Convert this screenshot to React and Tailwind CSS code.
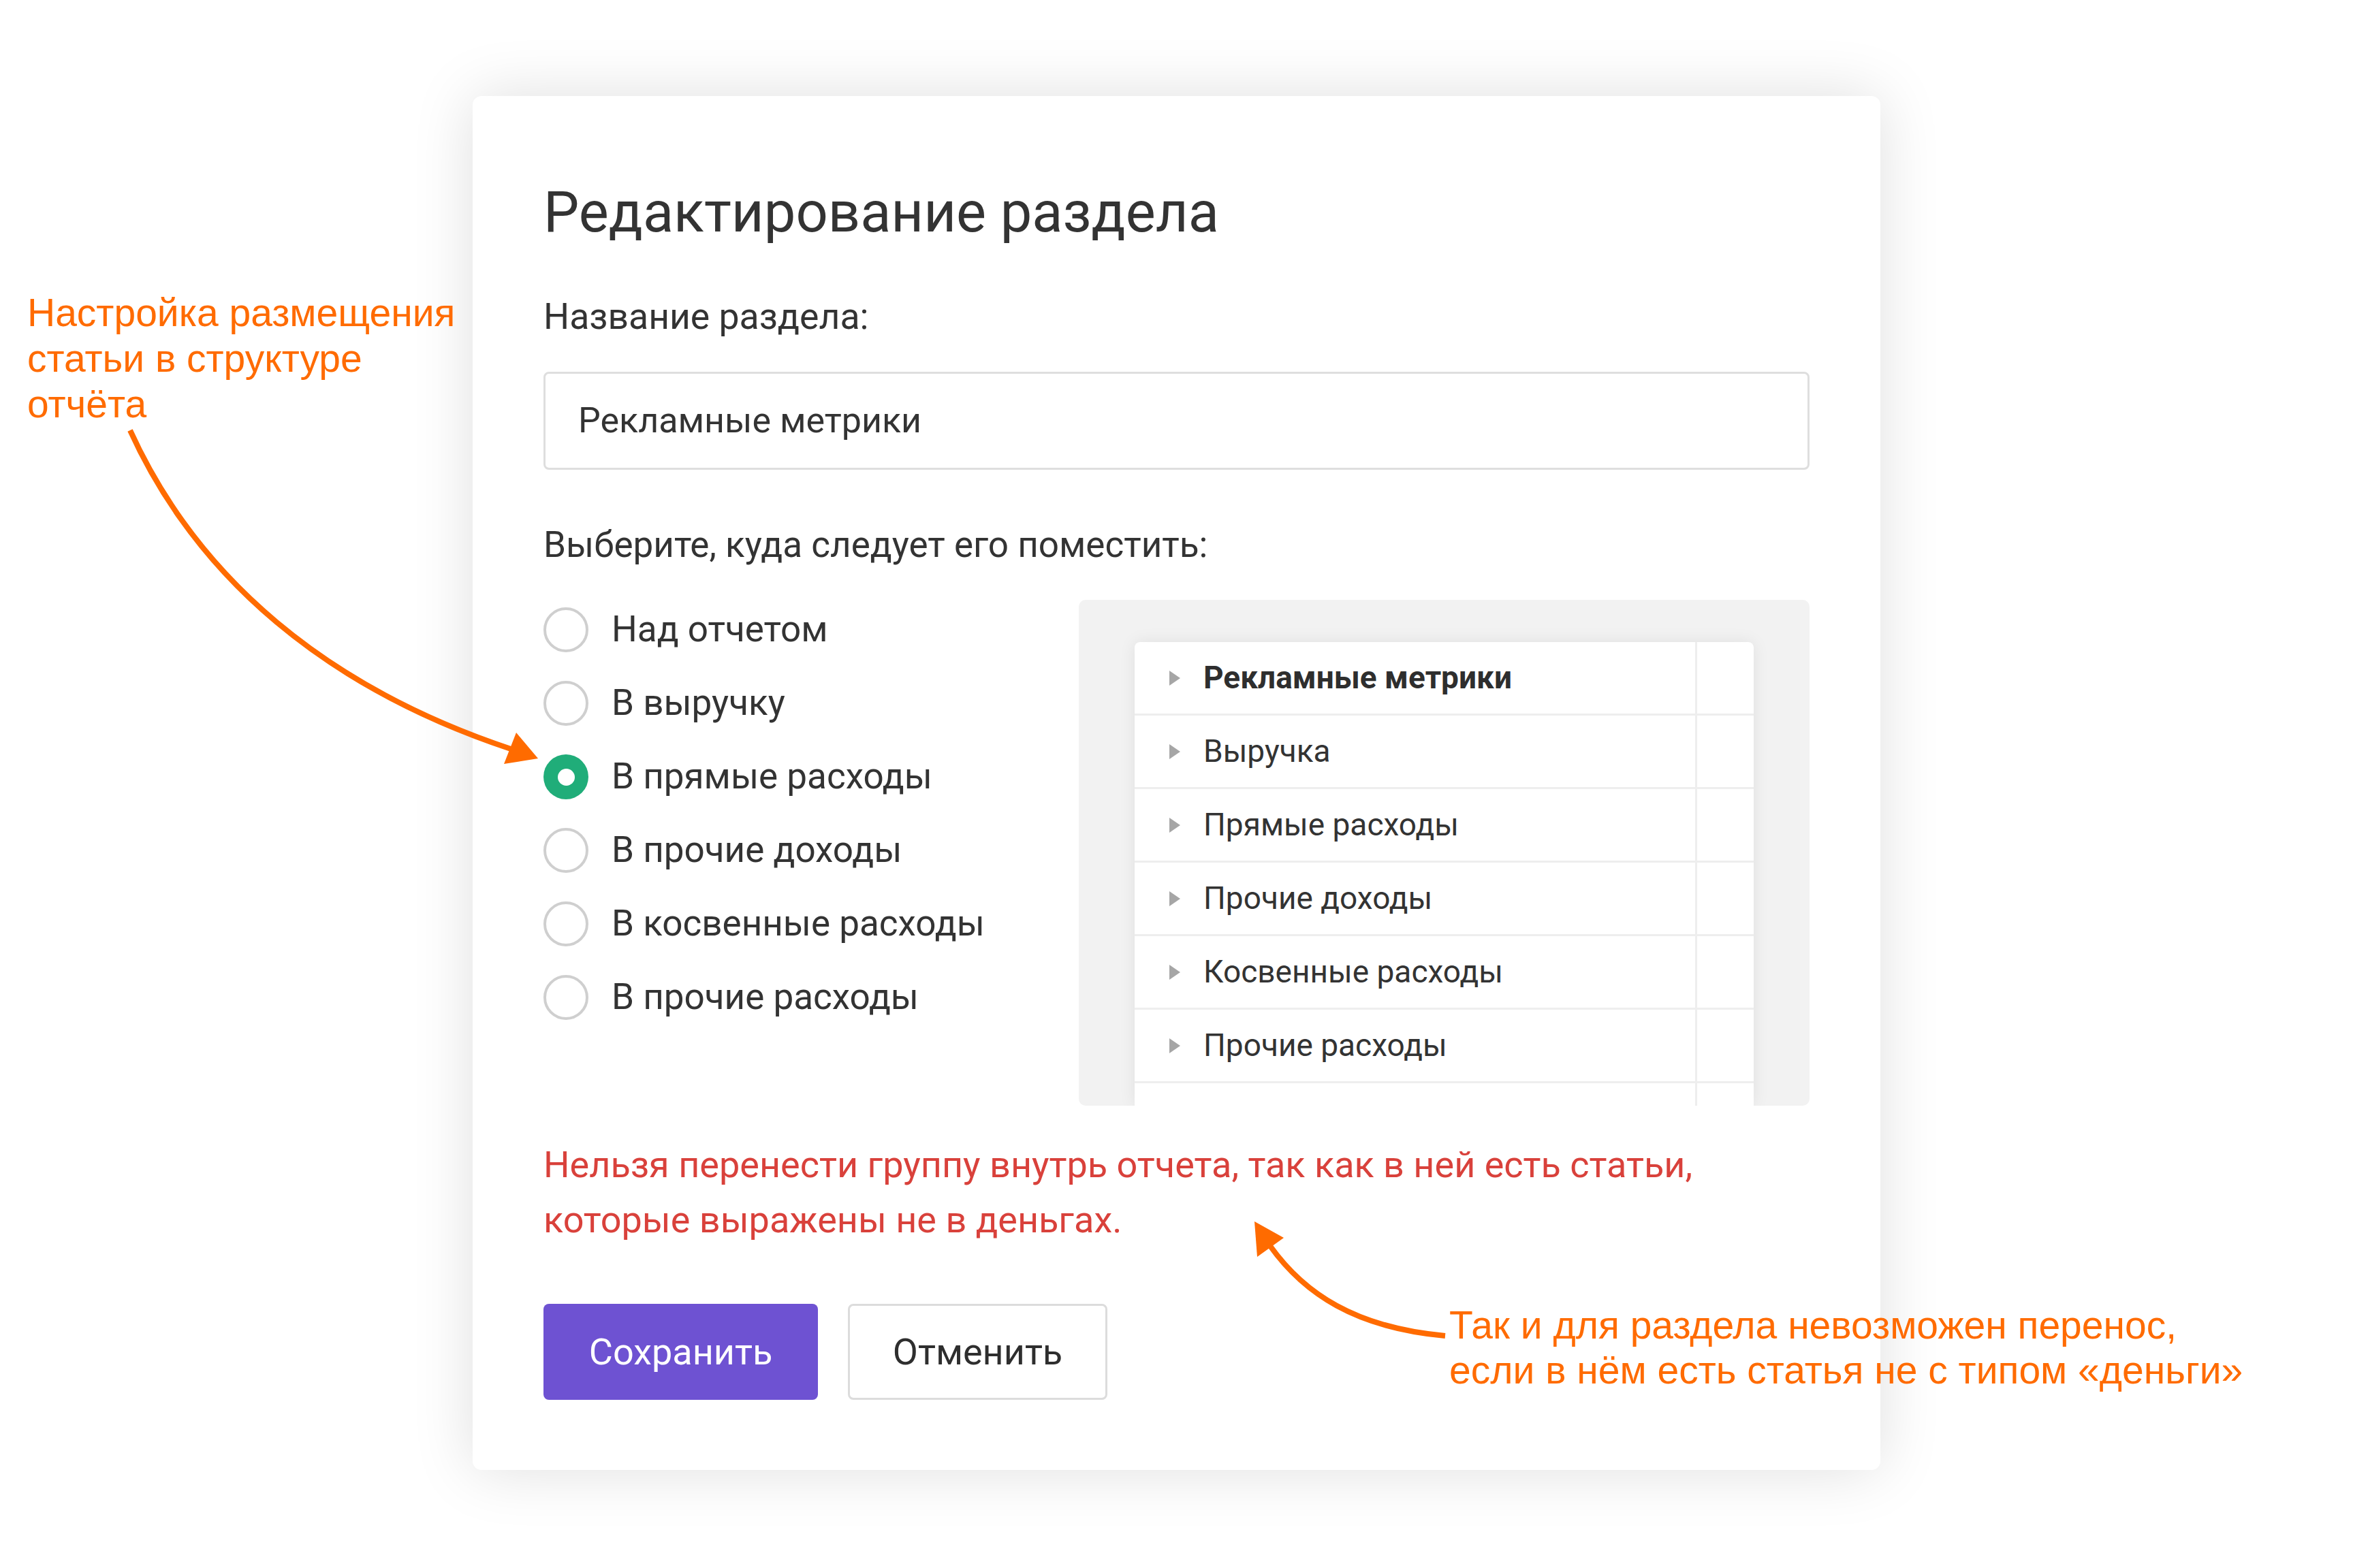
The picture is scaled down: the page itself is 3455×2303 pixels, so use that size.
const radios = [
  { label: "Над отчетом" },
  { label: "В выручку" },
  { label: "В прямые расходы", checked: true },
  { label: "В прочие доходы" },
  { label: "В косвенные расходы" },
  { label: "В прочие расходы" },
];

const sections = [
  "Рекламные метрики",
  "Выручка",
  "Прямые расходы",
  "Прочие доходы",
  "Косвенные расходы",
  "Прочие расходы",
  "",
];

const Radio = ({ checked }) =>
  checked ? (
    <span className="w-[66px] h-[66px] rounded-full bg-[#20ad79] flex items-center justify-center shrink-0">
      <span className="w-[25px] h-[25px] rounded-full bg-white" />
    </span>
  ) : (
    <span className="w-[66px] h-[66px] rounded-full border-[4px] border-[#cfcfcf] bg-white shrink-0" />
  );

const Arrows = () => (
  <svg className="absolute inset-0 pointer-events-none" width="3455" height="2303">
    {/* левая стрелка */}
    <path d="M191 632 C 290 850, 480 1010, 750 1100" fill="none" stroke="#ff6b00" strokeWidth="8" />
    <polygon points="790,1114 740,1122 758,1076" fill="#ff6b00" />
    {/* правая стрелка */}
    <path d="M2122 1962 C 1990 1950, 1915 1900, 1865 1830" fill="none" stroke="#ff6b00" strokeWidth="8" />
    <polygon points="1842,1794 1885,1818 1846,1846" fill="#ff6b00" />
  </svg>
);

export default function App() {
  return (
    <div
      className="relative w-[3455px] h-[2303px] bg-white overflow-hidden"
      style={{ fontFamily: "Roboto, 'Noto Sans', sans-serif" }}
    >
      <div className="ml-[694px] pt-[141px]">
        <div className="w-[2067px] bg-white rounded-[13px] shadow-[0_0_90px_rgba(0,0,0,0.13)] px-[104px] pt-[121px] pb-[103px] text-[#333333]">
          <h1 className="h-[100px] leading-[100px] text-[83px] font-normal">Редактирование раздела</h1>

          <div className="mt-[71px] h-[64px] leading-[64px] text-[53.5px]">Название раздела:</div>

          <div className="mt-[49px] h-[144px] border-[3px] border-[#dedede] rounded-[8px] flex items-center px-[48px] text-[52px]">
            Рекламные метрики
          </div>

          <div className="mt-[78px] h-[64px] leading-[64px] text-[53px]">Выберите, куда следует его поместить:</div>

          <div className="mt-[39px] flex items-start">
            <div className="w-[786px] flex flex-col">
              {radios.map((r) => (
                <div key={r.label} className="h-[108px] flex items-center gap-[34px] text-[53px]">
                  <Radio checked={r.checked} />
                  <span>{r.label}</span>
                </div>
              ))}
            </div>

            <div className="mt-[10px] flex-1 h-[743px] bg-[#f2f2f2] rounded-[10px] px-[82px] pt-[62px] overflow-hidden">
              <div className="h-full bg-white rounded-t-[8px] shadow-[0_0_24px_rgba(0,0,0,0.08)] flex flex-col">
                {sections.map((s, i) => (
                  <div key={i} className="h-[108px] shrink-0 flex border-b-[3px] border-[#eeeeee]">
                    <div className="flex-1 flex items-center pl-[51px] gap-[34px] text-[46px]">
                      {s && (
                        <span className="w-0 h-0 border-y-[11px] border-y-transparent border-l-[16px] border-l-[#a6a6a6]" />
                      )}
                      <span className={i === 0 ? "font-bold text-[#2e2e2e]" : ""}>{s}</span>
                    </div>
                    <div className="w-[86px] border-l-[3px] border-[#eeeeee]" />
                  </div>
                ))}
              </div>
            </div>
          </div>

          <p className="mt-[46px] text-[54px] leading-[81px] text-[#d9413b] whitespace-nowrap">
            Нельзя перенести группу внутрь отчета, так как в ней есть статьи,
            <br />
            которые выражены не в деньгах.
          </p>

          <div className="mt-[83px] flex gap-[44px]">
            <button className="w-[403px] h-[141px] rounded-[8px] bg-[#6e52d2] text-white text-[54px]">
              Сохранить
            </button>
            <button className="w-[381px] h-[141px] rounded-[8px] bg-white border-[3px] border-[#dcdcdc] text-[#2e2e2e] text-[54px]">
              Отменить
            </button>
          </div>
        </div>
      </div>

      <div
        className="absolute left-[40px] top-[426px] text-[57px] leading-[67px] text-[#ff6b00] whitespace-nowrap"
        style={{ fontFamily: "'Liberation Sans', Arial, sans-serif" }}
      >
        Настройка размещения
        <br />
        статьи в структуре
        <br />
        отчёта
      </div>

      <div
        className="absolute left-[2128px] top-[1913px] text-[57px] leading-[66px] text-[#ff6b00] whitespace-nowrap"
        style={{ fontFamily: "'Liberation Sans', Arial, sans-serif" }}
      >
        Так и для раздела невозможен перенос,
        <br />
        если в нём есть статья не с типом «деньги»
      </div>

      <Arrows />
    </div>
  );
}
